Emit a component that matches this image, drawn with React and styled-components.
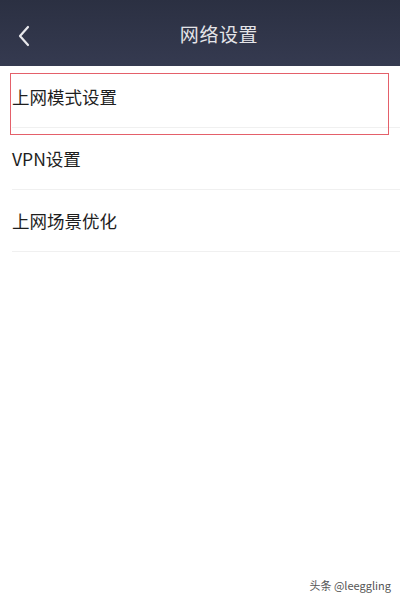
import styled, { createGlobalStyle } from "styled-components";

const GlobalStyle = createGlobalStyle`
  html, body {
    margin: 0;
    padding: 0;
    background: #ffffff;
    font-family: "Noto Sans CJK SC", "Noto Sans", sans-serif;
  }
`;

const items = ["上网模式设置", "VPN设置", "上网场景优化"];

const App = () => {
  return (
    <Page>
      <GlobalStyle />
      <Header>
        <Back>
          <svg width="14" height="22" viewBox="0 0 14 22" fill="none">
            <path d="M11 2 L3 11 L11 20" stroke="#e8e8ec" strokeWidth="2.2" strokeLinecap="round" strokeLinejoin="round" />
          </svg>
        </Back>
        <Title>网络设置</Title>
      </Header>
      <List>
        {items.map((text) => (
          <Row key={text}>{text}</Row>
        ))}
        <Mark />
      </List>
      <Footer>
        <Watermark>头条 @leeggling</Watermark>
      </Footer>
    </Page>
  );
};

export default App;

const Page = styled.div`
  width: 400px;
  height: 600px;
  display: flex;
  flex-direction: column;
  background: #fff;
  overflow: hidden;
`;

const Header = styled.div`
  height: 66px;
  flex-shrink: 0;
  display: flex;
  align-items: center;
  justify-content: center;
  position: relative;
  background: linear-gradient(180deg, #2b3042 0%, #353a50 100%);
`;

const Back = styled.div`
  position: absolute;
  left: 17px;
  top: 25px;
  display: flex;
`;

const Title = styled.div`
  color: #e4e4e8;
  font-size: 19px;
  letter-spacing: 0.6px;
  margin-left: 38px;
`;

const List = styled.div`
  position: relative;
  display: flex;
  flex-direction: column;
  padding-left: 12px;
`;

const Row = styled.div`
  height: 61px;
  display: flex;
  align-items: center;
  font-size: 17.5px;
  color: #1e1e1e;
  border-bottom: 1px solid #f0f0f0;
`;

const Mark = styled.div`
  position: absolute;
  left: 10px;
  top: 7px;
  width: 379px;
  height: 62px;
  border: 1.5px solid #e4606a;
  box-sizing: border-box;
`;

const Footer = styled.div`
  flex: 1;
  display: flex;
  align-items: flex-end;
  justify-content: flex-end;
  padding: 0 9px 7px 0;
`;

const Watermark = styled.div`
  font-size: 11px;
  color: #555;
`;
